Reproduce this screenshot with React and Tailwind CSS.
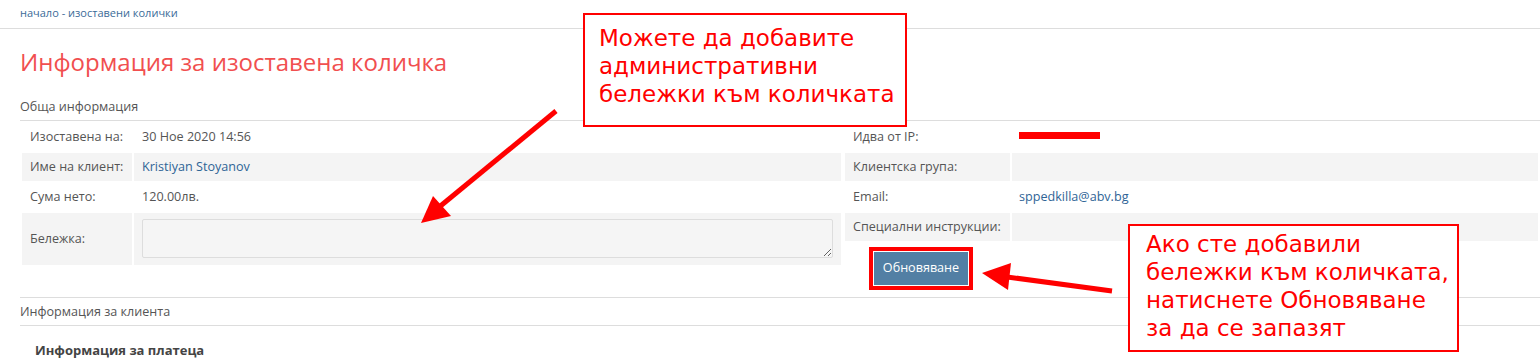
import React from "react";

const leftRows = [
  { label: "Изоставена на:", value: "30 Ное 2020 14:56" },
  { label: "Име на клиент:", value: "Kristiyan Stoyanov", link: true, grey: true },
  { label: "Сума нето:", value: "120.00лв." },
];

const rightRows = [
  { label: "Идва от IP:", ip: true },
  { label: "Клиентска група:", value: "", grey: true },
  { label: "Email:", value: "sppedkilla@abv.bg", link: true },
  { label: "Специални инструкции:", value: "", grey: true },
];

const Callout = ({ className, children }) => (
  <div
    className={
      "absolute border-2 border-[#ff0000] bg-white font-['DejaVu_Sans',sans-serif] text-[23px] leading-[28px] text-[#ff0000] " +
      className
    }
  >
    {children}
  </div>
);

export default function App() {
  return (
    <div className="relative h-[361px] overflow-hidden bg-white font-['Open_Sans',sans-serif] text-[12.6px] text-[#555]">
      {/* breadcrumb */}
      <div className="h-[29px] border-b border-[#ddd] pl-[20px] pt-[5px] text-[11px] leading-[16px] text-[#3b6b98]">
        начало - изоставени колички
      </div>

      <div className="pl-[20px]">
        <h1 className="mt-[16px] text-[24px] leading-[33px] text-[#f14f4f]">
          Информация за изоставена количка
        </h1>

        <div className="border-b border-[#ddd] pt-[20px] pb-[5px] leading-[17px] text-[#555]">
          Обща информация
        </div>

        <div className="flex items-start">
          {/* left table */}
          <table className="w-[823px] border-separate border-spacing-[2px]">
            <tbody>
              {leftRows.map((r) => (
                <tr key={r.label} className={r.grey ? "bg-[#f4f4f4]" : ""}>
                  <td className="h-[28px] w-[110px] px-[8px] text-[#555]">{r.label}</td>
                  <td className={"h-[28px] px-[8px] " + (r.link ? "text-[#2f6496]" : "text-[#555]")}>
                    {r.value}
                  </td>
                </tr>
              ))}
              <tr className="bg-[#f4f4f4]">
                <td className="w-[110px] px-[8px] text-[#555]">Бележка:</td>
                <td className="px-[8px] pt-[6px] pb-[7px]">
                  <textarea className="block h-[39px] w-full rounded-[2px] border border-[#ddd] bg-[#f5f5f5] outline-none" />
                </td>
              </tr>
            </tbody>
          </table>

          {/* right column */}
          <div className="flex-1">
            <table className="w-full border-separate border-spacing-[2px]">
              <tbody>
                {rightRows.map((r) => (
                  <tr key={r.label} className={r.grey ? "bg-[#f4f4f4]" : ""}>
                    <td className="h-[28px] w-[165px] px-[8px] text-[#555]">{r.label}</td>
                    <td className={"h-[28px] px-[7px] " + (r.link ? "text-[#2f6496]" : "text-[#555]")}>
                      {r.ip ? <span className="block h-[7px] w-[81px] -translate-y-[2px] bg-[#ff0000]" /> : r.value}
                    </td>
                  </tr>
                ))}
              </tbody>
            </table>
            <div className="ml-[26px] mt-[4px] inline-block border-4 border-[#ff0000] bg-white p-px">
              <button className="block h-[33px] w-[94px] bg-[#527fa4] text-[12.6px] text-white">
                Обновяване
              </button>
            </div>
          </div>
        </div>

        <div className="mt-[7px] border-y border-[#ddd] py-[5px] leading-[17px] text-[#555]">
          Информация за клиента
        </div>

        <div className="pl-[15px] pt-[15px] text-[13px] font-bold leading-[18px] text-[#444]">
          Информация за платеца
        </div>
      </div>

      {/* annotations */}
      <Callout className="left-[583px] top-[13px] h-[114px] w-[324px] pl-[14px] pt-[9px]">
        Можете да добавите
        <br />
        административни
        <br />
        бележки към количката
      </Callout>

      <Callout className="left-[1128px] top-[224px] h-[128px] w-[331px] pl-[16px] pt-[4px]">
        Ако сте добавили
        <br />
        бележки към количката,
        <br />
        натиснете Обновяване
        <br />
        за да се запазят
      </Callout>

      <svg className="pointer-events-none absolute left-0 top-0" width="1540" height="361">
        <line x1="556" y1="111" x2="438" y2="208" stroke="#ff0000" strokeWidth="5" />
        <polygon points="421,223 433,196 451,216" fill="#ff0000" />
        <line x1="1112" y1="291" x2="1000" y2="276" stroke="#ff0000" strokeWidth="5" />
        <polygon points="982,273 1011,263 1008,290" fill="#ff0000" />
      </svg>
    </div>
  );
}
